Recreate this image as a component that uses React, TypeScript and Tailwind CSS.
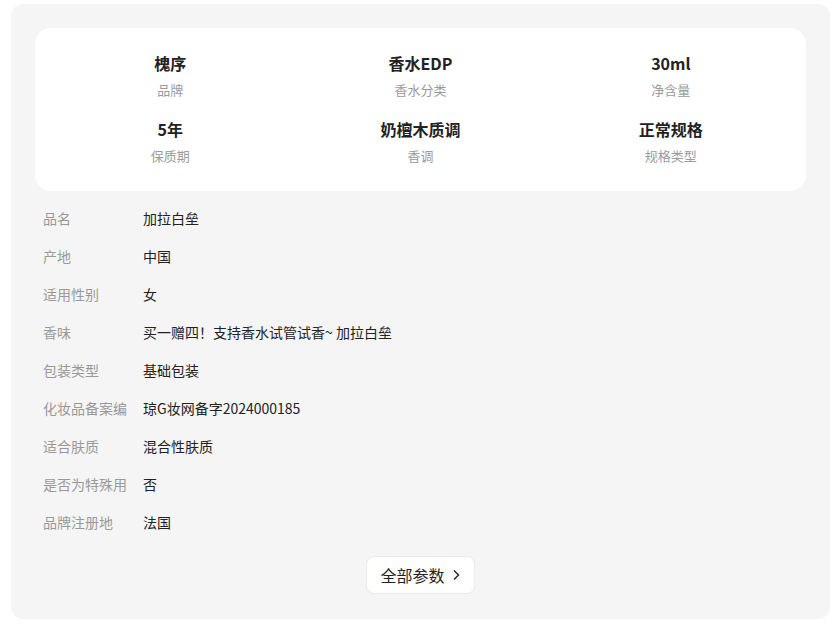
import React from "react";

const top = [
  { v: "槐序", l: "品牌" },
  { v: "香水EDP", l: "香水分类" },
  { v: "30ml", l: "净含量" },
  { v: "5年", l: "保质期" },
  { v: "奶檀木质调", l: "香调" },
  { v: "正常规格", l: "规格类型" },
];

const rows = [
  ["品名", "加拉白垒"],
  ["产地", "中国"],
  ["适用性别", "女"],
  ["香味", "买一赠四！支持香水试管试香~ 加拉白垒"],
  ["包装类型", "基础包装"],
  ["化妆品备案编", "琼G妆网备字2024000185"],
  ["适合肤质", "混合性肤质"],
  ["是否为特殊用", "否"],
  ["品牌注册地", "法国"],
];

export default function App() {
  return (
    <div
      className="w-[834px] h-[624px] bg-white pt-[4px] pl-[11px] pr-[4px]"
      style={{ fontFamily: '"Noto Sans CJK SC", "Noto Sans", sans-serif' }}
    >
      <div className="bg-[#f5f5f5] rounded-[12px] px-[24px] pt-[24px] pb-[25px]">
        <div className="bg-white rounded-[16px] px-[10px] pt-[23px] pb-[26px] grid grid-cols-3 gap-y-[18px]">
          {top.map((t) => (
            <div key={t.l} className="flex flex-col items-center">
              <div className="text-[16px] leading-[24px] font-bold text-[#222]">{t.v}</div>
              <div className="mt-[6px] text-[13px] leading-[18px] text-[#9a9a9a]">{t.l}</div>
            </div>
          ))}
        </div>
        <div className="mt-[8px] pl-[8px]">
          {rows.map(([k, v]) => (
            <div key={k} className="flex items-center h-[38px] text-[14px]">
              <div className="w-[86px] whitespace-nowrap text-[#999]">{k}</div>
              <div className="ml-[14px] text-[#222]">{v}</div>
            </div>
          ))}
        </div>
        <div className="mt-[15px] flex justify-center">
          <button className="h-[38px] px-[13px] flex items-center gap-[6px] bg-white border border-[#eaeaea] rounded-[8px] text-[16px] text-[#222]">
            <span>全部参数</span>
            <svg width="10" height="14" viewBox="0 0 10 14" fill="none">
              <path d="M3 2.5L7.5 7L3 11.5" stroke="#222" strokeWidth="1.4" />
            </svg>
          </button>
        </div>
      </div>
    </div>
  );
}
